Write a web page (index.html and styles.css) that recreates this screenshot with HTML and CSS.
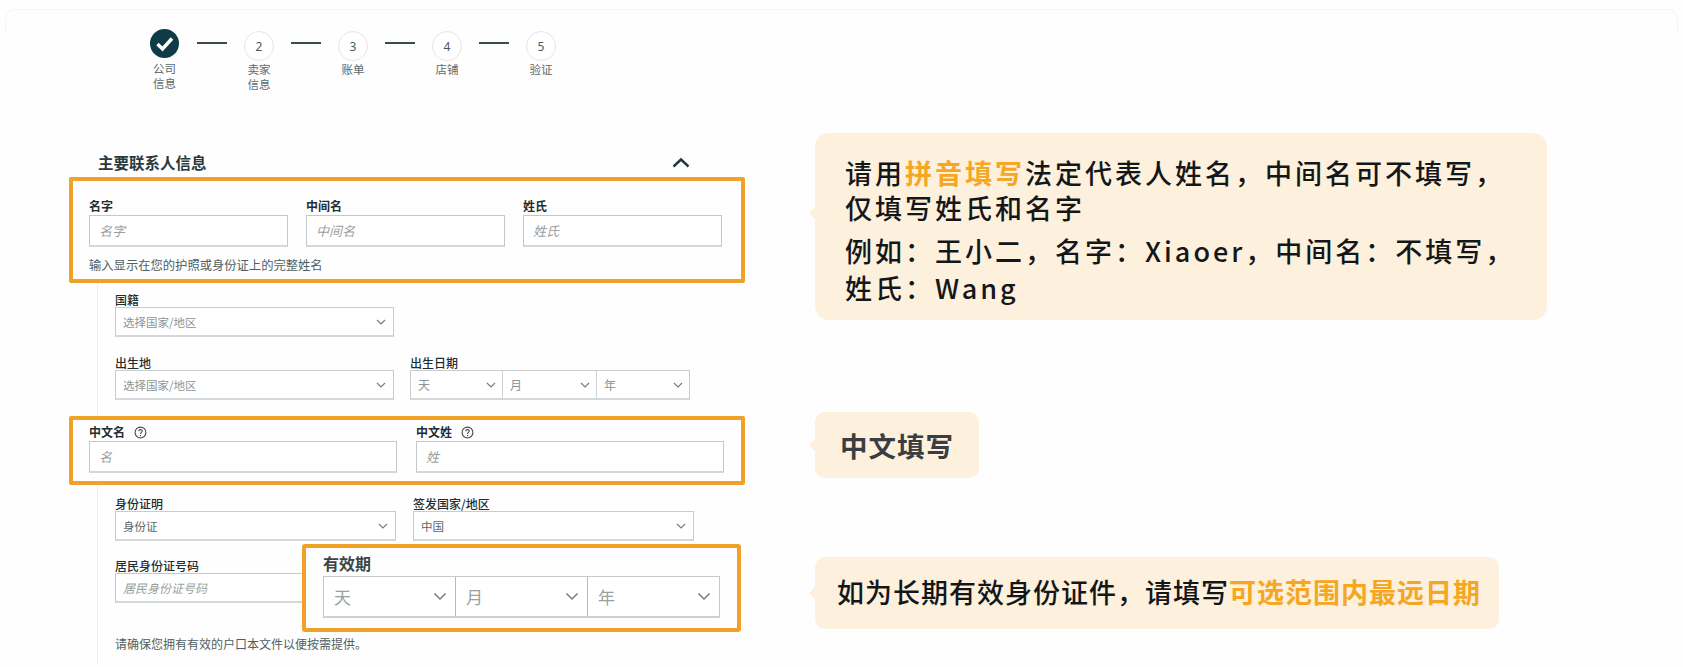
FILE: index.html
```html
<!DOCTYPE html>
<html lang="zh">
<head>
<meta charset="utf-8">
<title>主要联系人信息</title>
<link rel="stylesheet" href="styles.css">
</head>
<body>
<div class="page">
  <main class="left">
    <ol class="stepper">
      <li class="step step-first">
        <span class="dot done"><svg viewBox="0 0 29 29" width="29" height="29"><path d="M7.5 15 L12.5 20 L22 9.5" fill="none" stroke="#fff" stroke-width="3.4"/></svg></span>
        <span class="step-label">公司<br>信息</span>
      </li>
      <li class="line"></li>
      <li class="step"><span class="dot">2</span><span class="step-label">卖家<br>信息</span></li>
      <li class="line"></li>
      <li class="step"><span class="dot">3</span><span class="step-label">账单</span></li>
      <li class="line"></li>
      <li class="step"><span class="dot">4</span><span class="step-label">店铺</span></li>
      <li class="line"></li>
      <li class="step"><span class="dot">5</span><span class="step-label">验证</span></li>
    </ol>

    <div class="section-head">
      <h2>主要联系人信息</h2>
      <svg class="collapse" viewBox="0 0 18 11" width="18" height="11"><path d="M1.5 9.5 L9 2.5 L16.5 9.5" fill="none" stroke="#1f3a40" stroke-width="2.4"/></svg>
    </div>

    <div class="form">
      <section class="mark mark-name">
        <div class="grid-three">
          <div><label class="lbl">名字</label><div class="input">名字</div></div>
          <div><label class="lbl">中间名</label><div class="input">中间名</div></div>
          <div><label class="lbl">姓氏</label><div class="input">姓氏</div></div>
        </div>
        <p class="hint">输入显示在您的护照或身份证上的完整姓名</p>
      </section>

      <div class="row row-a first">
        <div><label class="lbl">国籍</label>
          <div class="select"><span>选择国家/地区</span><svg viewBox="0 0 10 6" width="10" height="6"><path d="M1 1 L5 5 L9 1" fill="none" stroke="#778" stroke-width="1.1"/></svg></div>
        </div>
      </div>

      <div class="row row-a second">
        <div><label class="lbl">出生地</label>
          <div class="select"><span>选择国家/地区</span><svg viewBox="0 0 10 6" width="10" height="6"><path d="M1 1 L5 5 L9 1" fill="none" stroke="#778" stroke-width="1.1"/></svg></div>
        </div>
        <div><label class="lbl">出生日期</label>
          <div class="date">
            <div class="part"><span>天</span><svg viewBox="0 0 10 6" width="10" height="6"><path d="M1 1 L5 5 L9 1" fill="none" stroke="#778" stroke-width="1.1"/></svg></div>
            <div class="part"><span>月</span><svg viewBox="0 0 10 6" width="10" height="6"><path d="M1 1 L5 5 L9 1" fill="none" stroke="#778" stroke-width="1.1"/></svg></div>
            <div class="part"><span>年</span><svg viewBox="0 0 10 6" width="10" height="6"><path d="M1 1 L5 5 L9 1" fill="none" stroke="#778" stroke-width="1.1"/></svg></div>
          </div>
        </div>
      </div>

      <section class="mark mark-cn">
        <div class="grid-two">
          <div><label class="lbl">中文名<svg class="help" viewBox="0 0 12 12" width="13" height="13"><circle cx="6" cy="6" r="5" fill="none" stroke="#444" stroke-width="1"/><path d="M4.4 4.8 C4.4 2.9 7.6 2.9 7.6 4.7 C7.6 5.9 6 5.9 6 7.3 M6 8.4 V9.4" fill="none" stroke="#444" stroke-width="1"/></svg></label><div class="input">名</div></div>
          <div><label class="lbl">中文姓<svg class="help" viewBox="0 0 12 12" width="13" height="13"><circle cx="6" cy="6" r="5" fill="none" stroke="#444" stroke-width="1"/><path d="M4.4 4.8 C4.4 2.9 7.6 2.9 7.6 4.7 C7.6 5.9 6 5.9 6 7.3 M6 8.4 V9.4" fill="none" stroke="#444" stroke-width="1"/></svg></label><div class="input">姓</div></div>
        </div>
      </section>

      <div class="row row-b third">
        <div><label class="lbl">身份证明</label>
          <div class="select dark"><span>身份证</span><svg viewBox="0 0 10 6" width="10" height="6"><path d="M1 1 L5 5 L9 1" fill="none" stroke="#778" stroke-width="1.1"/></svg></div>
        </div>
        <div><label class="lbl">签发国家/地区</label>
          <div class="select dark"><span>中国</span><svg viewBox="0 0 10 6" width="10" height="6"><path d="M1 1 L5 5 L9 1" fill="none" stroke="#778" stroke-width="1.1"/></svg></div>
        </div>
      </div>

      <div class="row row-b fourth">
        <div><label class="lbl">居民身份证号码</label><div class="input tall">居民身份证号码</div></div>
      </div>

      <p class="note">请确保您拥有有效的户口本文件以便按需提供。</p>

      <section class="mark mark-expiry">
        <h3>有效期</h3>
        <div class="date big">
          <div class="part"><span>天</span><svg viewBox="0 0 14 9" width="14" height="9"><path d="M1.5 1.5 L7 7 L12.5 1.5" fill="none" stroke="#778" stroke-width="1.5"/></svg></div>
          <div class="part"><span>月</span><svg viewBox="0 0 14 9" width="14" height="9"><path d="M1.5 1.5 L7 7 L12.5 1.5" fill="none" stroke="#778" stroke-width="1.5"/></svg></div>
          <div class="part"><span>年</span><svg viewBox="0 0 14 9" width="14" height="9"><path d="M1.5 1.5 L7 7 L12.5 1.5" fill="none" stroke="#778" stroke-width="1.5"/></svg></div>
        </div>
      </section>
    </div>
  </main>

  <aside class="right">
    <div class="callout c1">
      <p class="lead">请用<b>拼音填写</b>法定代表人姓名，中间名可不填写，<br>仅填写姓氏和名字</p>
      <p class="example">例如：王小二，名字：Xiaoer，中间名：不填写，<br>姓氏：Wang</p>
    </div>
    <div class="callout c2">中文填写</div>
    <div class="callout c3">如为长期有效身份证件，请填写<b>可选范围内最远日期</b></div>
  </aside>
</div>
</body>
</html>
```

FILE: styles.css
```css
* { box-sizing: border-box; }
html, body { margin: 0; padding: 0; background: #fefefe; }
body {
  font-family: "Noto Sans CJK SC", "Noto Sans", sans-serif;
  color: #2d3c40;
  height: 667px;
  overflow: hidden;
}
p, h2, h3, ol { margin: 0; padding: 0; }

.page { position: relative; display: flex; align-items: flex-start; }
/* faint edge of the card behind the form */
.page::before { content: ""; position: absolute; left: 5px; top: 9px; right: 5px; height: 24px; border: 1px solid #f5f5f5; border-bottom: 0; border-radius: 10px 10px 0 0; }
.left { position: relative; width: 815px; flex: none; }
.right { position: relative; flex: 1; display: flex; flex-direction: column; align-items: flex-start; padding-top: 133px; }

/* stepper */
.stepper { list-style: none; display: flex; align-items: flex-start; margin-left: 132px; padding-top: 29px; height: 152px; }
.step { width: 64px; display: flex; flex-direction: column; align-items: center; }
.step-first { width: 65px; }
.line { width: 30px; height: 2px; margin-top: 13px; background: #3b4c50; }
.dot {
  width: 30px; height: 30px; margin-top: 2px; border-radius: 50%;
  border: 1px solid #e6e6e6; background: #fff;
  display: flex; align-items: center; justify-content: center;
  font-family: "Noto Sans", sans-serif; font-size: 12px; color: #4a5a5e;
}
.dot.done { width: 29px; height: 29px; margin-top: 0; margin-bottom: 2px; border: 0; background: #0f3b47; }
.dot.done svg { display: block; }
.step-label { margin-top: 1px; font-size: 11.5px; line-height: 15px; text-align: center; color: #5b6a6d; }

/* section head */
.section-head { display: flex; align-items: center; justify-content: space-between; height: 22px; margin: -1px 0 0 98px; width: 592px; }
.section-head h2 { font-size: 15.5px; line-height: 22px; font-weight: 700; color: #2b3a3e; }
.collapse { display: block; }

/* form */
.form { position: relative; margin-top: 4px; padding-bottom: 12px; }
.form::before { content: ""; position: absolute; left: 97px; top: 105px; bottom: 0; width: 1px; background: #eeeeee; }

.lbl { display: block; height: 16px; font-size: 12px; line-height: 18px; font-weight: 500; color: #1f2e32; }
.input {
  height: 32px; padding: 0 9px; background: #fff;
  border: 1px solid #c4c8c9; border-bottom: 2px solid #d5d8d9;
  font-size: 13px; line-height: 30px; font-style: italic; color: #9a9fa0;
}
.input.tall { height: 30px; line-height: 28px; padding: 0 7px; font-size: 12px; }

.mark { position: relative; background: #fefefe; border: 4px solid #f0a128; border-radius: 2px; margin-left: 69px; width: 676px; }
.mark .lbl { font-weight: 700; }
.mark-name { padding: 17px 19px 6px 16px; height: 106px; }
.grid-three { display: grid; grid-template-columns: repeat(3, 199px); column-gap: 18px; }
.grid-three .lbl { margin-bottom: 1px; line-height: 16px; }
.hint { margin-top: 10px; font-size: 12.3px; line-height: 16px; color: #4f5e62; }

.mark-cn { height: 69px; padding: 2px 17px 0 16px; margin-top: 16px; }
.grid-two { display: grid; grid-template-columns: repeat(2, 308px); column-gap: 19px; }
.grid-two .lbl { margin-bottom: 3px; display: flex; align-items: flex-start; line-height: 20px; }
.help { margin: 4px 0 0 9px; }

.row { display: grid; margin-left: 115px; }
.row-a { grid-template-columns: 279px 280px; column-gap: 16px; }
.row-b { grid-template-columns: 281px 281px; column-gap: 17px; }
.first { margin-top: 8px; }
.second { margin-top: 17px; }
.third { margin-top: 10px; }
.fourth { margin-top: 16px; }

.select, .date { height: 30px; background: #fff; border: 1px solid #c9cccd; border-bottom: 2px solid #d5d8d9; }
.select { display: flex; align-items: center; justify-content: space-between; padding: 0 7px; font-size: 11.5px; color: #8d9495; }
.select.dark { color: #5a686b; }
.date { display: grid; grid-template-columns: 92px 94px 1fr; }
.part { display: flex; align-items: center; justify-content: space-between; padding: 0 6px 0 7px; border-right: 1px solid #d0d3d4; font-size: 12px; color: #8d9495; }
.part:last-child { border-right: 0; }

.note { margin: 33px 0 0 115px; font-size: 12px; line-height: 16px; color: #4f5e62; }

.mark-expiry { position: absolute; left: 302px; top: 367px; margin: 0; width: 439px; height: 88px; padding: 4px 17px 0 17px; border-radius: 3px; }
.mark-expiry h3 { font-size: 16px; line-height: 22px; font-weight: 700; color: #3a4649; }
.date.big { height: 42px; margin: 2px 0 0; border: 1px solid #c6c9ca; border-bottom: 2px solid #cfd2d3; grid-template-columns: 132px 132px 1fr; }
.date.big .part { padding: 0 8px 0 10px; font-size: 17px; color: #9a9fa0; border-right: 1px solid #b5b9ba; }
.date.big .part:last-child { border-right: 0; }

/* callouts */
.callout { position: relative; background: #fdf0dc; border-radius: 14px; color: #14171a; font-size: 27px; font-weight: 500; }
.callout::before { content: ""; position: absolute; left: -5px; top: 50%; width: 14px; height: 14px; margin-top: -7px; background: #fdf0dc; border-radius: 3px; transform: rotate(45deg) scale(.85); }
.callout b { font-weight: 700; color: #f5a623; }
.c1 { width: 732px; height: 187px; padding: 22px 0 0 30px; letter-spacing: 3px; }
.c1::before { top: 80px; }
.lead { line-height: 35px; position: relative; }
.example { margin-top: 7px; line-height: 37px; position: relative; }
.c2 { width: 164px; height: 66px; margin-top: 92px; padding-left: 25px; line-height: 66px; font-size: 27.5px; font-weight: 700; color: #3a3d42; letter-spacing: 1px; border-radius: 10px; }
.c3 { width: 684px; height: 72px; margin-top: 79px; padding-left: 22px; line-height: 70px; white-space: nowrap; letter-spacing: 1px; border-radius: 10px; }
```
